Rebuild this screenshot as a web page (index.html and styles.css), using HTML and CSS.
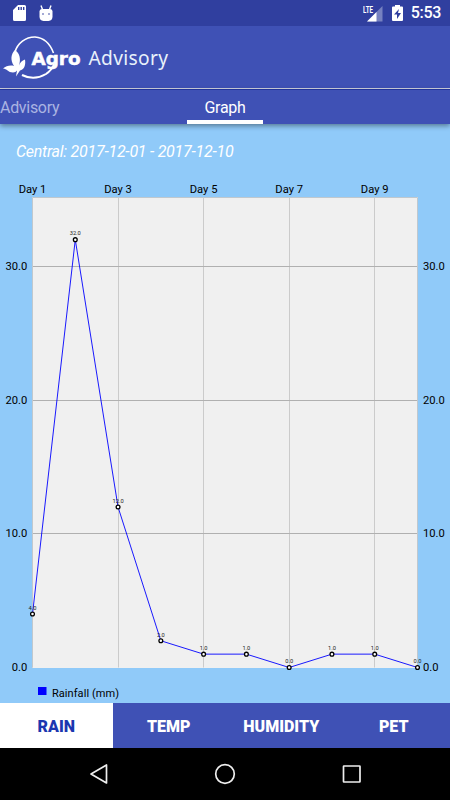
FILE: index.html
```html
<!DOCTYPE html>
<html lang="en">
<head>
    <meta charset="UTF-8">
    <meta name="viewport" content="width=device-width, initial-scale=1.0">
    <title>Agro Advisory</title>
    <link rel="stylesheet" href="styles.css">
</head>
<body>
    <header class="status-bar">
        <svg class="icon-sd" width="13" height="17" viewBox="0 0 13 17">
            <path fill="#fff" fill-rule="evenodd" d="M5 0h6.500A1.500 1.500 0 0 1 13 1.500v13a1.500 1.500 0 0 1-1.500 1.500h-10A1.500 1.500 0 0 1 0 14.500V5zM5 2v3h1.400V2zM7.500 2v3h1.400V2zM10 2v3h1.400V2z"/>
        </svg>
        <svg class="icon-droid" width="14" height="17" viewBox="0 0 14 17">
            <path d="M2 .5l1.500 4M12 .5l-1.500 4" stroke="#fff" stroke-width="1.400"/>
            <path fill="#fff" d="M.5 6Q1 4 3 4h8q2 0 2.500 2v5.500q0 4-4 4.500h-5Q.5 15.500 .5 11.500z"/>
            <circle cx="4" cy="9" r=".8" fill="#303f9f"/>
            <circle cx="10" cy="9" r=".8" fill="#303f9f"/>
        </svg>
        <span class="spacer"></span>
        <svg class="icon-signal" width="20" height="17" viewBox="0 0 20 17">
            <path fill="#7681c0" d="M19.500 1v15.500H4z"/>
            <path fill="#fff" d="M13.500 7v9.500H4z"/>
            <text class="lte" x="0" y="8" textLength="10" lengthAdjust="spacingAndGlyphs">LTE</text>
        </svg>
        <svg class="icon-battery" width="11" height="17" viewBox="0 0 11 17">
            <path fill="#fff" d="M3 0h5v1.500h2q1 0 1 1V15q0 1-1 1H1q-1 0-1-1V2.500q0-1 1-1h2z"/>
            <path fill="#303f9f" d="M7 4L2 9.500h3V14l4-6H6z"/>
        </svg>
        <span class="clock">5:53</span>
    </header>

    <div class="toolbar">
        <svg class="logo" width="180" height="60" viewBox="0 26 180 60">
            <path class="ring" d="M15 52A20.500 20.500 0 0 1 35 37Q48 38 53.500 53"/>
            <path class="ring ring-thick" d="M22 75Q34 81 46 74Q52 70 54 64"/>
            <path fill="#fff" d="M15 50c-4 4-5 10-1 16-4-1-8 0-11 2.500 4 0 5 4 10 4 2 0 3-1 4-2l-1 6 4-6c4-1 6-5 5-11-3 1-5 3-6 6 2-6 1-12-4-15.500z"/>
            <text class="logo-bold" x="31.500" y="64.500" textLength="49" lengthAdjust="spacingAndGlyphs">Agro</text>
            <text class="logo-light" x="88.500" y="64.500" textLength="79.500">Advisory</text>
        </svg>
    </div>

    <nav class="tabs">
        <a class="tab">Advisory</a>
        <a class="tab active">Graph</a>
    </nav>

    <main class="content">
        <h1 class="title">Central: 2017-12-01 - 2017-12-10</h1>
        <svg class="chart" id="chart" width="450" height="528" viewBox="0 175 450 528">
            <rect x="32" y="197" width="386" height="471" fill="#f0f0f0"/>
            <g id="grid"></g>
            <g id="series"></g>
            <rect x="38" y="687" width="8.500" height="8" fill="#00f"/>
            <text class="legend" x="52" y="697" textLength="67">Rainfall (mm)</text>
        </svg>
    </main>

    <div class="buttons">
        <button class="btn selected">RAIN</button>
        <button class="btn">TEMP</button>
        <button class="btn">HUMIDITY</button>
        <button class="btn">PET</button>
    </div>

    <footer class="nav-bar">
        <svg width="450" height="52" viewBox="0 748 450 52">
            <path d="M106.500 765v18L91 774z"/>
            <circle cx="225" cy="774" r="9.300"/>
            <rect x="343.500" y="766" width="16.500" height="16" rx=".5"/>
        </svg>
    </footer>

    <script>
        const rainfall = [4, 32, 12, 2, 1, 1, 0, 1, 1, 0];
        const left = 32.5, right = 417.5, top0 = 197.5, bottom = 667.5;
        const unit = 13.37;
        const step = (right - left) / (rainfall.length - 1);
        const xPos = i => left + i * step;
        const yPos = v => bottom - v * unit;

        let grid = '';
        for (let i = 0; i < rainfall.length; i += 2) {
            const x = Math.floor(xPos(i)) + 0.5;
            grid += `<path class="line-v" d="M${x} ${top0}V${bottom}"/>`;
            grid += `<text class="axis middle" x="${xPos(i)}" y="192.5">Day ${i + 1}</text>`;
        }
        for (let v = 0; v <= 30; v += 10) {
            const y = Math.floor(yPos(v)) + 0.5;
            if (v > 0) grid += `<path class="line-h" d="M${left} ${y}H${right}"/>`;
            grid += `<text class="axis end" x="27.3" y="${y + 3.5}">${v.toFixed(1)}</text>`;
            grid += `<text class="axis" x="423" y="${y + 3.5}">${v.toFixed(1)}</text>`;
        }
        grid += `<path class="frame" d="M${left} ${bottom}V${top0}H${right}V${bottom}"/>`;
        document.getElementById('grid').innerHTML = grid;

        const points = rainfall.map((v, i) => `${xPos(i)},${yPos(v)}`).join(' ');
        let series = `<polyline class="rain-line" points="${points}"/>`;
        rainfall.forEach((v, i) => {
            series += `<circle class="dot" cx="${xPos(i)}" cy="${yPos(v)}" r="1.9"/>`;
            series += `<text class="value" x="${xPos(i)}" y="${yPos(v) - 4.2}">${v.toFixed(1)}</text>`;
        });
        document.getElementById('series').innerHTML = series;
    </script>
</body>
</html>
```
FILE: styles.css
```css
* {
    margin: 0;
    padding: 0;
    box-sizing: border-box;
}

body {
    width: 450px;
    height: 800px;
    display: flex;
    flex-direction: column;
    font-family: Roboto, sans-serif;
    background-color: #90caf9;
    overflow: hidden;
}

svg {
    display: block;
}

.status-bar {
    height: 26px;
    display: flex;
    align-items: center;
    padding: 0 9px 0 13px;
    background-color: #303f9f;
    color: #fff;
}

.icon-droid {
    margin-left: 13px;
}

.spacer {
    flex: 1;
}

.icon-battery {
    margin: 0 8px 0 9px;
}

.lte {
    font-size: 9px;
    font-weight: 700;
    fill: #fff;
}

.clock {
    font-size: 16px;
    font-weight: 500;
    line-height: 28px;
    letter-spacing: -0.3px;
}

.toolbar {
    height: 63px;
    background-color: #3f51b5;
    border-bottom: 1px solid #d0d2e2;
}

.ring {
    fill: none;
    stroke: #fff;
    stroke-width: 1.6;
}

.ring-thick {
    stroke-width: 2;
}

.logo-bold {
    font-family: "DejaVu Sans", sans-serif;
    font-size: 18.5px;
    font-weight: 700;
    fill: #fff;
    stroke: #fff;
    stroke-width: 0.5;
}

.logo-light {
    font-family: "Noto Sans", sans-serif;
    font-size: 19.2px;
    fill: #e8f1fb;
}

.tabs {
    height: 35px;
    display: flex;
    background-color: #3f51b5;
    border-top: 1px solid #20339a;
    box-shadow: 0 2px 5px rgba(0, 0, 0, 0.4);
    z-index: 1;
}

.tab {
    width: 76px;
    font-size: 16px;
    line-height: 36px;
    letter-spacing: -0.3px;
    color: #aab4e2;
}

.tab.active {
    margin-left: 111px;
    color: #fff;
    text-align: center;
    border-bottom: 4px solid #fff;
}

.content {
    height: 579px;
    flex: none;
}

.title {
    height: 51px;
    padding: 18px 0 0 16px;
    font-size: 16px;
    font-weight: 400;
    font-style: italic;
    line-height: 20px;
    letter-spacing: -0.26px;
    color: #fff;
}

.axis {
    font-size: 11.2px;
}

.middle {
    text-anchor: middle;
}

.end {
    text-anchor: end;
}

.line-v {
    stroke: #cbcbcb;
}

.line-h {
    stroke: #b0b0b0;
}

.frame {
    fill: none;
    stroke: #c0c8ce;
}

.rain-line {
    fill: none;
    stroke: #00f;
    stroke-width: 0.9;
}

.dot {
    fill: #fff;
    stroke: #000;
    stroke-width: 1.3;
}

.value {
    font-size: 5.7px;
    text-anchor: middle;
    fill: #222;
}

.legend {
    font-size: 11px;
}

.buttons {
    height: 45px;
    display: grid;
    grid-template-columns: repeat(4, 1fr);
    flex: none;
}

.btn {
    border: none;
    background-color: #3f51b5;
    color: #fff;
    font-family: inherit;
    font-size: 16px;
    font-weight: 900;
    padding-top: 1px;
}

.btn.selected {
    background-color: #fff;
    color: #1c37b0;
}

.nav-bar {
    height: 52px;
    flex: none;
    background-color: #000;
}

.nav-bar path,
.nav-bar circle,
.nav-bar rect {
    fill: none;
    stroke: #eee;
    stroke-width: 1.7;
    stroke-linejoin: round;
}
```
